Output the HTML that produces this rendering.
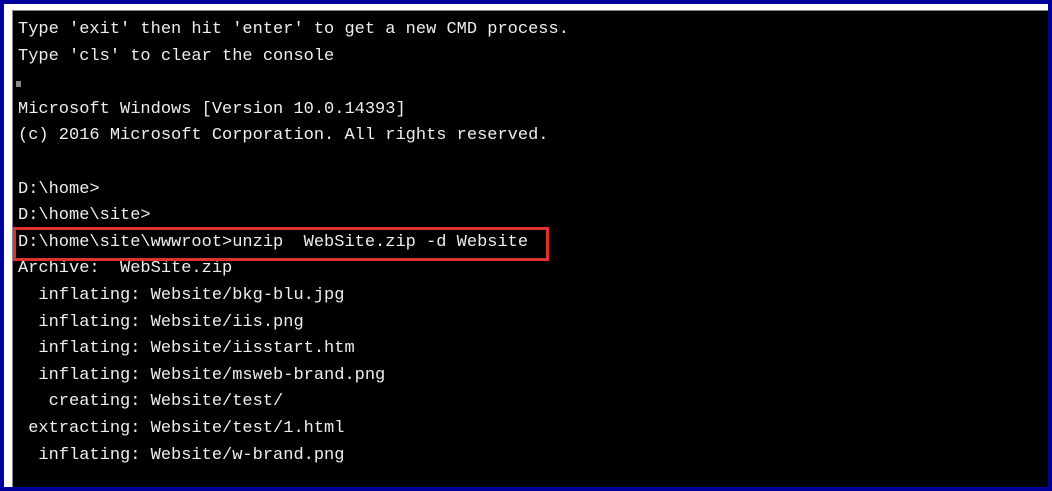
<!DOCTYPE html>
<html><head><meta charset="utf-8"><style>
html,body{margin:0;padding:0;background:#fff;}
body{width:1052px;height:491px;position:relative;overflow:hidden;}
.blue{position:absolute;left:0;top:0;width:1052px;height:491px;box-sizing:border-box;border:4px solid #00009a;}
.term{position:absolute;left:12px;top:10px;width:1036px;height:477px;background:#000;border-left:1px solid #888;border-top:1px solid #888;box-sizing:border-box;}
pre{position:absolute;left:18px;top:17px;margin:0;font-family:"Liberation Mono","DejaVu Sans Mono",monospace;font-size:17px;line-height:26.6px;color:#eee;}
.cur{position:absolute;left:16px;top:81px;width:5px;height:6px;background:#888;}
.box{position:absolute;left:13px;top:227px;width:536px;height:34px;border:3px solid #e03030;box-sizing:border-box;}
</style></head><body>
<div class="blue"></div>
<div class="term"></div>
<div class="cur"></div>
<pre>Type 'exit' then hit 'enter' to get a new CMD process.
Type 'cls' to clear the console

Microsoft Windows [Version 10.0.14393]
(c) 2016 Microsoft Corporation. All rights reserved.

D:\home>
D:\home\site>
D:\home\site\wwwroot>unzip  WebSite.zip -d Website
Archive:  WebSite.zip
  inflating: Website/bkg-blu.jpg
  inflating: Website/iis.png
  inflating: Website/iisstart.htm
  inflating: Website/msweb-brand.png
   creating: Website/test/
 extracting: Website/test/1.html
  inflating: Website/w-brand.png</pre>
<div class="box"></div>
</body></html>
